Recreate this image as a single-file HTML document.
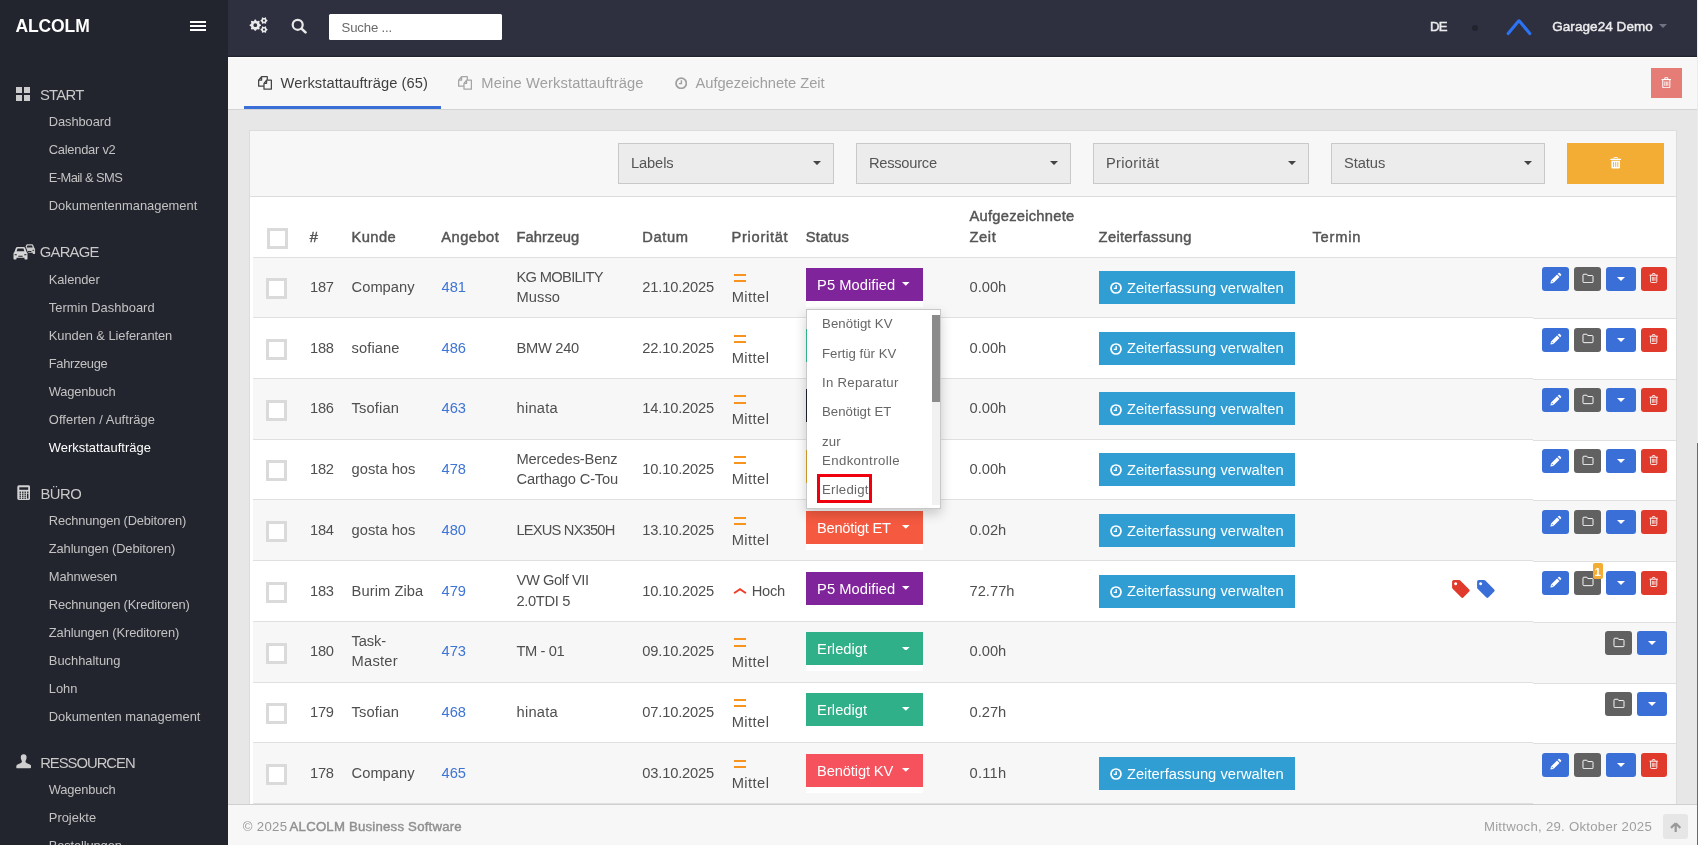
<!DOCTYPE html>
<html lang="de"><head><meta charset="utf-8"><title>ALCOLM</title><style>html,body{margin:0;padding:0;background:#fff;}
#p{position:absolute;left:0;top:0;width:1698px;height:845px;overflow:hidden;font-family:"Liberation Sans",sans-serif;font-size:14.4px;will-change:transform;}
#p main,#p nav,#p footer,#p header,#p aside{display:block;position:static;margin:0;padding:0;height:0;}
#p div,#p svg,#p .t{position:absolute;display:block;}
#p .t{white-space:nowrap;line-height:1;}</style></head><body><div id="p">
<div style="left:0px;top:0px;width:1698px;height:845px;background:#e7e7e7;"></div>
<div style="left:1697px;top:0px;width:1px;height:845px;background:#ececec;"></div>
<div style="left:1697px;top:443px;width:1px;height:402px;background:#6b6b6b;"></div>
<main>
<div style="left:249px;top:130px;width:1428px;height:680px;background:#ffffff;border:1px solid #dcdcdc;box-sizing:border-box;"></div>
<div style="left:250px;top:131px;width:1426px;height:65px;background:#f7f7f7;"></div>
<div style="left:250px;top:196px;width:1426px;height:1px;background:#dddddd;"></div>
<div style="left:618.3px;top:143.2px;width:215.7px;height:40.4px;background:#ececec;border:1px solid #c9c9c9;box-sizing:border-box;"></div>
<span class="t" style="left:631.00px;top:155px;font-size:14.7px;line-height:16px;color:#555;letter-spacing:-0.130px;">Labels</span>
<svg style="left:813px;top:161px;" width="8" height="4.1" viewBox="0 0 8 4"><path d="M0 0h8L4 4z" fill="#444"/></svg>
<div style="left:856.2px;top:143.2px;width:214.8px;height:40.4px;background:#ececec;border:1px solid #c9c9c9;box-sizing:border-box;"></div>
<span class="t" style="left:868.90px;top:155px;font-size:14.7px;line-height:16px;color:#555;letter-spacing:-0.245px;">Ressource</span>
<svg style="left:1050px;top:161px;" width="8" height="4.1" viewBox="0 0 8 4"><path d="M0 0h8L4 4z" fill="#444"/></svg>
<div style="left:1093.2px;top:143.2px;width:215.6px;height:40.4px;background:#ececec;border:1px solid #c9c9c9;box-sizing:border-box;"></div>
<span class="t" style="left:1105.90px;top:155px;font-size:14.7px;line-height:16px;color:#555;letter-spacing:0.311px;">Priorität</span>
<svg style="left:1287.8px;top:161px;" width="8" height="4.1" viewBox="0 0 8 4"><path d="M0 0h8L4 4z" fill="#444"/></svg>
<div style="left:1331.2px;top:143.2px;width:213.7px;height:40.4px;background:#ececec;border:1px solid #c9c9c9;box-sizing:border-box;"></div>
<span class="t" style="left:1343.90px;top:155px;font-size:14.7px;line-height:16px;color:#555;letter-spacing:-0.056px;">Status</span>
<svg style="left:1523.9px;top:161px;" width="8" height="4.1" viewBox="0 0 8 4"><path d="M0 0h8L4 4z" fill="#444"/></svg>
<div style="left:1567px;top:143px;width:97px;height:41px;background:#f3ad35;"></div>
<div style="left:252.5px;top:257px;width:1423.5px;height:1px;background:#e0e0e0;"></div>
<div style="left:252.5px;top:258px;width:1280.5px;height:59px;background:#f7f7f7;"></div>
<div style="left:1533px;top:258px;width:143px;height:60px;background:#f7f7f7;"></div>
<div style="left:252.5px;top:317px;width:1280.5px;height:1px;background:#e0e0e0;"></div>
<div style="left:1533px;top:318px;width:143px;height:1px;background:#e0e0e0;"></div>
<div style="left:266px;top:278.2px;width:21px;height:21px;background:#fff;border:3px solid #dadada;box-sizing:border-box;"></div>
<span class="t" style="left:310.10px;top:279px;font-size:14.7px;line-height:16px;color:#4f4f4f;letter-spacing:-0.335px;">187</span>
<span class="t" style="left:351.60px;top:279px;font-size:14.7px;line-height:16px;color:#4f4f4f;letter-spacing:0.006px;">Company</span>
<span class="t" style="left:441.50px;top:279px;font-size:14.7px;line-height:16px;color:#3d74d6;">481</span>
<span class="t" style="left:516.50px;top:269px;font-size:14.7px;line-height:16px;color:#4f4f4f;letter-spacing:-0.687px;">KG MOBILITY</span>
<span class="t" style="left:516.50px;top:289px;font-size:14.7px;line-height:16px;color:#4f4f4f;letter-spacing:0.048px;">Musso</span>
<span class="t" style="left:642.30px;top:279px;font-size:14.7px;line-height:16px;color:#4f4f4f;letter-spacing:-0.171px;">21.10.2025</span>
<div style="left:733.7px;top:273.8px;width:12.2px;height:2px;background:#f7941e;"></div>
<div style="left:733.7px;top:280.1px;width:12.2px;height:2px;background:#f7941e;"></div>
<span class="t" style="left:731.70px;top:289px;font-size:14.7px;line-height:16px;color:#4f4f4f;letter-spacing:0.435px;">Mittel</span>
<div style="left:806.2px;top:267.8px;width:116.8px;height:38.8px;background:#ffffff;"></div>
<div style="left:806.2px;top:267.8px;width:116.8px;height:33px;background:#80249b;"></div>
<span class="t" style="left:817.10px;top:277px;font-size:14.7px;line-height:16px;color:#fff;letter-spacing:0.049px;">P5 Modified</span>
<svg style="left:902.4px;top:282.2px;" width="7.6" height="3.8" viewBox="0 0 8 4"><path d="M0 0h8L4 4z" fill="#fff"/></svg>
<span class="t" style="left:969.50px;top:279px;font-size:14.7px;line-height:16px;color:#4f4f4f;letter-spacing:0.009px;">0.00h</span>
<div style="left:1099px;top:270.9px;width:196px;height:33.1px;background:#309ed3;"></div>
<svg style="left:1110.2px;top:282px;" width="12" height="12" viewBox="0 0 12 12"><circle cx="6" cy="6" r="5" fill="none" stroke="#fff" stroke-width="1.7"/><path d="M6.2 3.2v3.2H3.8" fill="none" stroke="#fff" stroke-width="1.4"/></svg>
<span class="t" style="left:1126.90px;top:280px;font-size:14.7px;line-height:16px;color:#fff;letter-spacing:0.034px;">Zeiterfassung verwalten</span>
<div style="left:1542px;top:266.9px;width:27px;height:24px;background:#3b6fd8;border-radius:3px;"></div>
<svg style="left:1549px;top:272.4px;" width="13" height="13" viewBox="0 0 14 14"><path d="M2.2 9.2 L1.5 12.5 L4.8 11.8 L11.3 5.3 L8.7 2.7 Z M9.4 2 L12 4.6 L12.9 3.7 a0.9 0.9 0 0 0 0-1.3 L11.6 1.1 a0.9 0.9 0 0 0-1.3 0 Z" fill="#fff"/><path d="M2.9 9.6 L4.4 11.1" stroke="#3b6fd8" stroke-width="0.9"/></svg>
<div style="left:1574px;top:266.9px;width:27px;height:24px;background:#616161;border-radius:3px;"></div>
<svg style="left:1581.5px;top:272.6px;" width="12" height="10.6" viewBox="0 0 12.6 11.2"><path d="M1 2.2 a0.9 0.9 0 0 1 .9-.9 h3.2 l1 1.4 h4.6 a0.9 0.9 0 0 1 .9.9 v5.7 a0.9 0.9 0 0 1-.9.9 h-8.8 a0.9 0.9 0 0 1-.9-.9 z" fill="none" stroke="#fff" stroke-width="1.0"/></svg>
<div style="left:1606px;top:266.9px;width:30px;height:24px;background:#3b6fd8;border-radius:3px;"></div>
<svg style="left:1617px;top:276.9px;" width="8" height="4" viewBox="0 0 8 4"><path d="M0 0h8L4 4z" fill="#fff"/></svg>
<div style="left:1641px;top:266.9px;width:26px;height:24px;background:#e03a2c;border-radius:3px;"></div>
<svg style="left:1649.3px;top:273.2px;" width="9.4" height="10.2" viewBox="0 0 12 13"><path d="M4.3 2.3 V1.4 a.7.7 0 0 1 .7-.7 h2 a.7.7 0 0 1 .7.7 v.9 M2 3 V11 a1.2 1.2 0 0 0 1.2 1.2 h5.6 a1.2 1.2 0 0 0 1.2-1.2 V3" fill="none" stroke="#fff" stroke-width="1.15"/><path d="M.7 2.8 H11.3" stroke="#fff" stroke-width="1.25"/><path d="M4.3 5 v5 M6 5 v5 M7.7 5 v5" stroke="#fff" stroke-width=".95"/></svg>
<div style="left:252.5px;top:378px;width:1280.5px;height:1px;background:#e0e0e0;"></div>
<div style="left:1533px;top:379px;width:143px;height:1px;background:#e0e0e0;"></div>
<div style="left:266px;top:338.95px;width:21px;height:21px;background:#fff;border:3px solid #dadada;box-sizing:border-box;"></div>
<span class="t" style="left:310.10px;top:340px;font-size:14.7px;line-height:16px;color:#4f4f4f;letter-spacing:-0.335px;">188</span>
<span class="t" style="left:351.60px;top:340px;font-size:14.7px;line-height:16px;color:#4f4f4f;letter-spacing:0.091px;">sofiane</span>
<span class="t" style="left:441.50px;top:340px;font-size:14.7px;line-height:16px;color:#3d74d6;">486</span>
<span class="t" style="left:516.50px;top:340px;font-size:14.7px;line-height:16px;color:#4f4f4f;letter-spacing:-0.283px;">BMW 240</span>
<span class="t" style="left:642.30px;top:340px;font-size:14.7px;line-height:16px;color:#4f4f4f;letter-spacing:-0.171px;">22.10.2025</span>
<div style="left:733.7px;top:334.55px;width:12.2px;height:2px;background:#f7941e;"></div>
<div style="left:733.7px;top:340.85px;width:12.2px;height:2px;background:#f7941e;"></div>
<span class="t" style="left:731.70px;top:350px;font-size:14.7px;line-height:16px;color:#4f4f4f;letter-spacing:0.435px;">Mittel</span>
<div style="left:806.2px;top:328.55px;width:116.8px;height:38.8px;background:#ffffff;"></div>
<div style="left:806.2px;top:328.55px;width:116.8px;height:33px;background:#30b088;"></div>
<span class="t" style="left:969.50px;top:340px;font-size:14.7px;line-height:16px;color:#4f4f4f;letter-spacing:0.009px;">0.00h</span>
<div style="left:1099px;top:331.65px;width:196px;height:33.1px;background:#309ed3;"></div>
<svg style="left:1110.2px;top:342.75px;" width="12" height="12" viewBox="0 0 12 12"><circle cx="6" cy="6" r="5" fill="none" stroke="#fff" stroke-width="1.7"/><path d="M6.2 3.2v3.2H3.8" fill="none" stroke="#fff" stroke-width="1.4"/></svg>
<span class="t" style="left:1126.90px;top:340px;font-size:14.7px;line-height:16px;color:#fff;letter-spacing:0.034px;">Zeiterfassung verwalten</span>
<div style="left:1542px;top:327.65px;width:27px;height:24px;background:#3b6fd8;border-radius:3px;"></div>
<svg style="left:1549px;top:333.15px;" width="13" height="13" viewBox="0 0 14 14"><path d="M2.2 9.2 L1.5 12.5 L4.8 11.8 L11.3 5.3 L8.7 2.7 Z M9.4 2 L12 4.6 L12.9 3.7 a0.9 0.9 0 0 0 0-1.3 L11.6 1.1 a0.9 0.9 0 0 0-1.3 0 Z" fill="#fff"/><path d="M2.9 9.6 L4.4 11.1" stroke="#3b6fd8" stroke-width="0.9"/></svg>
<div style="left:1574px;top:327.65px;width:27px;height:24px;background:#616161;border-radius:3px;"></div>
<svg style="left:1581.5px;top:333.35px;" width="12" height="10.6" viewBox="0 0 12.6 11.2"><path d="M1 2.2 a0.9 0.9 0 0 1 .9-.9 h3.2 l1 1.4 h4.6 a0.9 0.9 0 0 1 .9.9 v5.7 a0.9 0.9 0 0 1-.9.9 h-8.8 a0.9 0.9 0 0 1-.9-.9 z" fill="none" stroke="#fff" stroke-width="1.0"/></svg>
<div style="left:1606px;top:327.65px;width:30px;height:24px;background:#3b6fd8;border-radius:3px;"></div>
<svg style="left:1617px;top:337.65px;" width="8" height="4" viewBox="0 0 8 4"><path d="M0 0h8L4 4z" fill="#fff"/></svg>
<div style="left:1641px;top:327.65px;width:26px;height:24px;background:#e03a2c;border-radius:3px;"></div>
<svg style="left:1649.3px;top:333.95px;" width="9.4" height="10.2" viewBox="0 0 12 13"><path d="M4.3 2.3 V1.4 a.7.7 0 0 1 .7-.7 h2 a.7.7 0 0 1 .7.7 v.9 M2 3 V11 a1.2 1.2 0 0 0 1.2 1.2 h5.6 a1.2 1.2 0 0 0 1.2-1.2 V3" fill="none" stroke="#fff" stroke-width="1.15"/><path d="M.7 2.8 H11.3" stroke="#fff" stroke-width="1.25"/><path d="M4.3 5 v5 M6 5 v5 M7.7 5 v5" stroke="#fff" stroke-width=".95"/></svg>
<div style="left:252.5px;top:379px;width:1280.5px;height:60px;background:#f7f7f7;"></div>
<div style="left:1533px;top:380px;width:143px;height:60px;background:#f7f7f7;"></div>
<div style="left:252.5px;top:439px;width:1280.5px;height:1px;background:#e0e0e0;"></div>
<div style="left:1533px;top:440px;width:143px;height:1px;background:#e0e0e0;"></div>
<div style="left:266px;top:399.7px;width:21px;height:21px;background:#fff;border:3px solid #dadada;box-sizing:border-box;"></div>
<span class="t" style="left:310.10px;top:400px;font-size:14.7px;line-height:16px;color:#4f4f4f;letter-spacing:-0.335px;">186</span>
<span class="t" style="left:351.60px;top:400px;font-size:14.7px;line-height:16px;color:#4f4f4f;letter-spacing:0.138px;">Tsofian</span>
<span class="t" style="left:441.50px;top:400px;font-size:14.7px;line-height:16px;color:#3d74d6;">463</span>
<span class="t" style="left:516.50px;top:400px;font-size:14.7px;line-height:16px;color:#4f4f4f;letter-spacing:0.247px;">hinata</span>
<span class="t" style="left:642.30px;top:400px;font-size:14.7px;line-height:16px;color:#4f4f4f;letter-spacing:-0.171px;">14.10.2025</span>
<div style="left:733.7px;top:395.3px;width:12.2px;height:2px;background:#f7941e;"></div>
<div style="left:733.7px;top:401.6px;width:12.2px;height:2px;background:#f7941e;"></div>
<span class="t" style="left:731.70px;top:411px;font-size:14.7px;line-height:16px;color:#4f4f4f;letter-spacing:0.435px;">Mittel</span>
<div style="left:806.2px;top:389.3px;width:116.8px;height:38.8px;background:#ffffff;"></div>
<div style="left:806.2px;top:389.3px;width:116.8px;height:33px;background:#1b1d2b;"></div>
<span class="t" style="left:969.50px;top:400px;font-size:14.7px;line-height:16px;color:#4f4f4f;letter-spacing:0.009px;">0.00h</span>
<div style="left:1099px;top:392.4px;width:196px;height:33.1px;background:#309ed3;"></div>
<svg style="left:1110.2px;top:403.5px;" width="12" height="12" viewBox="0 0 12 12"><circle cx="6" cy="6" r="5" fill="none" stroke="#fff" stroke-width="1.7"/><path d="M6.2 3.2v3.2H3.8" fill="none" stroke="#fff" stroke-width="1.4"/></svg>
<span class="t" style="left:1126.90px;top:401px;font-size:14.7px;line-height:16px;color:#fff;letter-spacing:0.034px;">Zeiterfassung verwalten</span>
<div style="left:1542px;top:388.4px;width:27px;height:24px;background:#3b6fd8;border-radius:3px;"></div>
<svg style="left:1549px;top:393.9px;" width="13" height="13" viewBox="0 0 14 14"><path d="M2.2 9.2 L1.5 12.5 L4.8 11.8 L11.3 5.3 L8.7 2.7 Z M9.4 2 L12 4.6 L12.9 3.7 a0.9 0.9 0 0 0 0-1.3 L11.6 1.1 a0.9 0.9 0 0 0-1.3 0 Z" fill="#fff"/><path d="M2.9 9.6 L4.4 11.1" stroke="#3b6fd8" stroke-width="0.9"/></svg>
<div style="left:1574px;top:388.4px;width:27px;height:24px;background:#616161;border-radius:3px;"></div>
<svg style="left:1581.5px;top:394.1px;" width="12" height="10.6" viewBox="0 0 12.6 11.2"><path d="M1 2.2 a0.9 0.9 0 0 1 .9-.9 h3.2 l1 1.4 h4.6 a0.9 0.9 0 0 1 .9.9 v5.7 a0.9 0.9 0 0 1-.9.9 h-8.8 a0.9 0.9 0 0 1-.9-.9 z" fill="none" stroke="#fff" stroke-width="1.0"/></svg>
<div style="left:1606px;top:388.4px;width:30px;height:24px;background:#3b6fd8;border-radius:3px;"></div>
<svg style="left:1617px;top:398.4px;" width="8" height="4" viewBox="0 0 8 4"><path d="M0 0h8L4 4z" fill="#fff"/></svg>
<div style="left:1641px;top:388.4px;width:26px;height:24px;background:#e03a2c;border-radius:3px;"></div>
<svg style="left:1649.3px;top:394.7px;" width="9.4" height="10.2" viewBox="0 0 12 13"><path d="M4.3 2.3 V1.4 a.7.7 0 0 1 .7-.7 h2 a.7.7 0 0 1 .7.7 v.9 M2 3 V11 a1.2 1.2 0 0 0 1.2 1.2 h5.6 a1.2 1.2 0 0 0 1.2-1.2 V3" fill="none" stroke="#fff" stroke-width="1.15"/><path d="M.7 2.8 H11.3" stroke="#fff" stroke-width="1.25"/><path d="M4.3 5 v5 M6 5 v5 M7.7 5 v5" stroke="#fff" stroke-width=".95"/></svg>
<div style="left:252.5px;top:499px;width:1280.5px;height:1px;background:#e0e0e0;"></div>
<div style="left:1533px;top:500px;width:143px;height:1px;background:#e0e0e0;"></div>
<div style="left:266px;top:460.45px;width:21px;height:21px;background:#fff;border:3px solid #dadada;box-sizing:border-box;"></div>
<span class="t" style="left:310.10px;top:461px;font-size:14.7px;line-height:16px;color:#4f4f4f;letter-spacing:-0.335px;">182</span>
<span class="t" style="left:351.60px;top:461px;font-size:14.7px;line-height:16px;color:#4f4f4f;letter-spacing:0.012px;">gosta hos</span>
<span class="t" style="left:441.50px;top:461px;font-size:14.7px;line-height:16px;color:#3d74d6;">478</span>
<span class="t" style="left:516.50px;top:451px;font-size:14.7px;line-height:16px;color:#4f4f4f;letter-spacing:-0.143px;">Mercedes-Benz</span>
<span class="t" style="left:516.50px;top:471px;font-size:14.7px;line-height:16px;color:#4f4f4f;letter-spacing:-0.148px;">Carthago C-Tou</span>
<span class="t" style="left:642.30px;top:461px;font-size:14.7px;line-height:16px;color:#4f4f4f;letter-spacing:-0.171px;">10.10.2025</span>
<div style="left:733.7px;top:456.05px;width:12.2px;height:2px;background:#f7941e;"></div>
<div style="left:733.7px;top:462.35px;width:12.2px;height:2px;background:#f7941e;"></div>
<span class="t" style="left:731.70px;top:471px;font-size:14.7px;line-height:16px;color:#4f4f4f;letter-spacing:0.435px;">Mittel</span>
<div style="left:806.2px;top:450.05px;width:116.8px;height:38.8px;background:#ffffff;"></div>
<div style="left:806.2px;top:450.05px;width:116.8px;height:33px;background:#c9962c;"></div>
<span class="t" style="left:969.50px;top:461px;font-size:14.7px;line-height:16px;color:#4f4f4f;letter-spacing:0.009px;">0.00h</span>
<div style="left:1099px;top:453.15px;width:196px;height:33.1px;background:#309ed3;"></div>
<svg style="left:1110.2px;top:464.25px;" width="12" height="12" viewBox="0 0 12 12"><circle cx="6" cy="6" r="5" fill="none" stroke="#fff" stroke-width="1.7"/><path d="M6.2 3.2v3.2H3.8" fill="none" stroke="#fff" stroke-width="1.4"/></svg>
<span class="t" style="left:1126.90px;top:462px;font-size:14.7px;line-height:16px;color:#fff;letter-spacing:0.034px;">Zeiterfassung verwalten</span>
<div style="left:1542px;top:449.15px;width:27px;height:24px;background:#3b6fd8;border-radius:3px;"></div>
<svg style="left:1549px;top:454.65px;" width="13" height="13" viewBox="0 0 14 14"><path d="M2.2 9.2 L1.5 12.5 L4.8 11.8 L11.3 5.3 L8.7 2.7 Z M9.4 2 L12 4.6 L12.9 3.7 a0.9 0.9 0 0 0 0-1.3 L11.6 1.1 a0.9 0.9 0 0 0-1.3 0 Z" fill="#fff"/><path d="M2.9 9.6 L4.4 11.1" stroke="#3b6fd8" stroke-width="0.9"/></svg>
<div style="left:1574px;top:449.15px;width:27px;height:24px;background:#616161;border-radius:3px;"></div>
<svg style="left:1581.5px;top:454.85px;" width="12" height="10.6" viewBox="0 0 12.6 11.2"><path d="M1 2.2 a0.9 0.9 0 0 1 .9-.9 h3.2 l1 1.4 h4.6 a0.9 0.9 0 0 1 .9.9 v5.7 a0.9 0.9 0 0 1-.9.9 h-8.8 a0.9 0.9 0 0 1-.9-.9 z" fill="none" stroke="#fff" stroke-width="1.0"/></svg>
<div style="left:1606px;top:449.15px;width:30px;height:24px;background:#3b6fd8;border-radius:3px;"></div>
<svg style="left:1617px;top:459.15px;" width="8" height="4" viewBox="0 0 8 4"><path d="M0 0h8L4 4z" fill="#fff"/></svg>
<div style="left:1641px;top:449.15px;width:26px;height:24px;background:#e03a2c;border-radius:3px;"></div>
<svg style="left:1649.3px;top:455.45px;" width="9.4" height="10.2" viewBox="0 0 12 13"><path d="M4.3 2.3 V1.4 a.7.7 0 0 1 .7-.7 h2 a.7.7 0 0 1 .7.7 v.9 M2 3 V11 a1.2 1.2 0 0 0 1.2 1.2 h5.6 a1.2 1.2 0 0 0 1.2-1.2 V3" fill="none" stroke="#fff" stroke-width="1.15"/><path d="M.7 2.8 H11.3" stroke="#fff" stroke-width="1.25"/><path d="M4.3 5 v5 M6 5 v5 M7.7 5 v5" stroke="#fff" stroke-width=".95"/></svg>
<div style="left:252.5px;top:500px;width:1280.5px;height:60px;background:#f7f7f7;"></div>
<div style="left:1533px;top:501px;width:143px;height:60px;background:#f7f7f7;"></div>
<div style="left:252.5px;top:560px;width:1280.5px;height:1px;background:#e0e0e0;"></div>
<div style="left:1533px;top:561px;width:143px;height:1px;background:#e0e0e0;"></div>
<div style="left:266px;top:521.2px;width:21px;height:21px;background:#fff;border:3px solid #dadada;box-sizing:border-box;"></div>
<span class="t" style="left:310.10px;top:522px;font-size:14.7px;line-height:16px;color:#4f4f4f;letter-spacing:-0.335px;">184</span>
<span class="t" style="left:351.60px;top:522px;font-size:14.7px;line-height:16px;color:#4f4f4f;letter-spacing:0.012px;">gosta hos</span>
<span class="t" style="left:441.50px;top:522px;font-size:14.7px;line-height:16px;color:#3d74d6;">480</span>
<span class="t" style="left:516.50px;top:522px;font-size:14.7px;line-height:16px;color:#4f4f4f;letter-spacing:-0.813px;">LEXUS NX350H</span>
<span class="t" style="left:642.30px;top:522px;font-size:14.7px;line-height:16px;color:#4f4f4f;letter-spacing:-0.171px;">13.10.2025</span>
<div style="left:733.7px;top:516.8px;width:12.2px;height:2px;background:#f7941e;"></div>
<div style="left:733.7px;top:523.1px;width:12.2px;height:2px;background:#f7941e;"></div>
<span class="t" style="left:731.70px;top:532px;font-size:14.7px;line-height:16px;color:#4f4f4f;letter-spacing:0.435px;">Mittel</span>
<div style="left:806.2px;top:510.8px;width:116.8px;height:38.8px;background:#ffffff;"></div>
<div style="left:806.2px;top:510.8px;width:116.8px;height:33px;background:#f55a40;"></div>
<span class="t" style="left:817.10px;top:520px;font-size:14.7px;line-height:16px;color:#fff;letter-spacing:-0.295px;">Benötigt ET</span>
<svg style="left:902.4px;top:525.2px;" width="7.6" height="3.8" viewBox="0 0 8 4"><path d="M0 0h8L4 4z" fill="#fff"/></svg>
<span class="t" style="left:969.50px;top:522px;font-size:14.7px;line-height:16px;color:#4f4f4f;letter-spacing:0.009px;">0.02h</span>
<div style="left:1099px;top:513.9px;width:196px;height:33.1px;background:#309ed3;"></div>
<svg style="left:1110.2px;top:525px;" width="12" height="12" viewBox="0 0 12 12"><circle cx="6" cy="6" r="5" fill="none" stroke="#fff" stroke-width="1.7"/><path d="M6.2 3.2v3.2H3.8" fill="none" stroke="#fff" stroke-width="1.4"/></svg>
<span class="t" style="left:1126.90px;top:523px;font-size:14.7px;line-height:16px;color:#fff;letter-spacing:0.034px;">Zeiterfassung verwalten</span>
<div style="left:1542px;top:509.9px;width:27px;height:24px;background:#3b6fd8;border-radius:3px;"></div>
<svg style="left:1549px;top:515.4px;" width="13" height="13" viewBox="0 0 14 14"><path d="M2.2 9.2 L1.5 12.5 L4.8 11.8 L11.3 5.3 L8.7 2.7 Z M9.4 2 L12 4.6 L12.9 3.7 a0.9 0.9 0 0 0 0-1.3 L11.6 1.1 a0.9 0.9 0 0 0-1.3 0 Z" fill="#fff"/><path d="M2.9 9.6 L4.4 11.1" stroke="#3b6fd8" stroke-width="0.9"/></svg>
<div style="left:1574px;top:509.9px;width:27px;height:24px;background:#616161;border-radius:3px;"></div>
<svg style="left:1581.5px;top:515.6px;" width="12" height="10.6" viewBox="0 0 12.6 11.2"><path d="M1 2.2 a0.9 0.9 0 0 1 .9-.9 h3.2 l1 1.4 h4.6 a0.9 0.9 0 0 1 .9.9 v5.7 a0.9 0.9 0 0 1-.9.9 h-8.8 a0.9 0.9 0 0 1-.9-.9 z" fill="none" stroke="#fff" stroke-width="1.0"/></svg>
<div style="left:1606px;top:509.9px;width:30px;height:24px;background:#3b6fd8;border-radius:3px;"></div>
<svg style="left:1617px;top:519.9px;" width="8" height="4" viewBox="0 0 8 4"><path d="M0 0h8L4 4z" fill="#fff"/></svg>
<div style="left:1641px;top:509.9px;width:26px;height:24px;background:#e03a2c;border-radius:3px;"></div>
<svg style="left:1649.3px;top:516.2px;" width="9.4" height="10.2" viewBox="0 0 12 13"><path d="M4.3 2.3 V1.4 a.7.7 0 0 1 .7-.7 h2 a.7.7 0 0 1 .7.7 v.9 M2 3 V11 a1.2 1.2 0 0 0 1.2 1.2 h5.6 a1.2 1.2 0 0 0 1.2-1.2 V3" fill="none" stroke="#fff" stroke-width="1.15"/><path d="M.7 2.8 H11.3" stroke="#fff" stroke-width="1.25"/><path d="M4.3 5 v5 M6 5 v5 M7.7 5 v5" stroke="#fff" stroke-width=".95"/></svg>
<div style="left:252.5px;top:621px;width:1280.5px;height:1px;background:#e0e0e0;"></div>
<div style="left:1533px;top:622px;width:143px;height:1px;background:#e0e0e0;"></div>
<div style="left:266px;top:581.95px;width:21px;height:21px;background:#fff;border:3px solid #dadada;box-sizing:border-box;"></div>
<span class="t" style="left:310.10px;top:583px;font-size:14.7px;line-height:16px;color:#4f4f4f;letter-spacing:-0.335px;">183</span>
<span class="t" style="left:351.60px;top:583px;font-size:14.7px;line-height:16px;color:#4f4f4f;letter-spacing:0.059px;">Burim Ziba</span>
<span class="t" style="left:441.50px;top:583px;font-size:14.7px;line-height:16px;color:#3d74d6;">479</span>
<span class="t" style="left:516.50px;top:572px;font-size:14.7px;line-height:16px;color:#4f4f4f;letter-spacing:-0.410px;">VW Golf VII</span>
<span class="t" style="left:516.50px;top:593px;font-size:14.7px;line-height:16px;color:#4f4f4f;letter-spacing:-0.353px;">2.0TDI 5</span>
<span class="t" style="left:642.30px;top:583px;font-size:14.7px;line-height:16px;color:#4f4f4f;letter-spacing:-0.171px;">10.10.2025</span>
<svg style="left:733px;top:587.35px;" width="14" height="7" viewBox="0 0 14 7"><path d="M1.7 5.7 L7 2.2 L12.3 5.7" fill="none" stroke="#f03b25" stroke-width="1.9" stroke-linecap="round"/></svg>
<span class="t" style="left:751.70px;top:583px;font-size:14.7px;line-height:16px;color:#4f4f4f;letter-spacing:-0.247px;">Hoch</span>
<div style="left:806.2px;top:571.55px;width:116.8px;height:38.8px;background:#ffffff;"></div>
<div style="left:806.2px;top:571.55px;width:116.8px;height:33px;background:#80249b;"></div>
<span class="t" style="left:817.10px;top:581px;font-size:14.7px;line-height:16px;color:#fff;letter-spacing:0.049px;">P5 Modified</span>
<svg style="left:902.4px;top:585.95px;" width="7.6" height="3.8" viewBox="0 0 8 4"><path d="M0 0h8L4 4z" fill="#fff"/></svg>
<span class="t" style="left:969.50px;top:583px;font-size:14.7px;line-height:16px;color:#4f4f4f;letter-spacing:0.013px;">72.77h</span>
<div style="left:1099px;top:574.65px;width:196px;height:33.1px;background:#309ed3;"></div>
<svg style="left:1110.2px;top:585.75px;" width="12" height="12" viewBox="0 0 12 12"><circle cx="6" cy="6" r="5" fill="none" stroke="#fff" stroke-width="1.7"/><path d="M6.2 3.2v3.2H3.8" fill="none" stroke="#fff" stroke-width="1.4"/></svg>
<span class="t" style="left:1126.90px;top:583px;font-size:14.7px;line-height:16px;color:#fff;letter-spacing:0.034px;">Zeiterfassung verwalten</span>
<div style="left:1542px;top:570.65px;width:27px;height:24px;background:#3b6fd8;border-radius:3px;"></div>
<svg style="left:1549px;top:576.15px;" width="13" height="13" viewBox="0 0 14 14"><path d="M2.2 9.2 L1.5 12.5 L4.8 11.8 L11.3 5.3 L8.7 2.7 Z M9.4 2 L12 4.6 L12.9 3.7 a0.9 0.9 0 0 0 0-1.3 L11.6 1.1 a0.9 0.9 0 0 0-1.3 0 Z" fill="#fff"/><path d="M2.9 9.6 L4.4 11.1" stroke="#3b6fd8" stroke-width="0.9"/></svg>
<div style="left:1574px;top:570.65px;width:27px;height:24px;background:#616161;border-radius:3px;"></div>
<svg style="left:1581.5px;top:576.35px;" width="12" height="10.6" viewBox="0 0 12.6 11.2"><path d="M1 2.2 a0.9 0.9 0 0 1 .9-.9 h3.2 l1 1.4 h4.6 a0.9 0.9 0 0 1 .9.9 v5.7 a0.9 0.9 0 0 1-.9.9 h-8.8 a0.9 0.9 0 0 1-.9-.9 z" fill="none" stroke="#fff" stroke-width="1.0"/></svg>
<div style="left:1606px;top:570.65px;width:30px;height:24px;background:#3b6fd8;border-radius:3px;"></div>
<svg style="left:1617px;top:580.65px;" width="8" height="4" viewBox="0 0 8 4"><path d="M0 0h8L4 4z" fill="#fff"/></svg>
<div style="left:1641px;top:570.65px;width:26px;height:24px;background:#e03a2c;border-radius:3px;"></div>
<svg style="left:1649.3px;top:576.95px;" width="9.4" height="10.2" viewBox="0 0 12 13"><path d="M4.3 2.3 V1.4 a.7.7 0 0 1 .7-.7 h2 a.7.7 0 0 1 .7.7 v.9 M2 3 V11 a1.2 1.2 0 0 0 1.2 1.2 h5.6 a1.2 1.2 0 0 0 1.2-1.2 V3" fill="none" stroke="#fff" stroke-width="1.15"/><path d="M.7 2.8 H11.3" stroke="#fff" stroke-width="1.25"/><path d="M4.3 5 v5 M6 5 v5 M7.7 5 v5" stroke="#fff" stroke-width=".95"/></svg>
<svg style="left:1450.5px;top:578.95px;" width="20.5" height="20.5" viewBox="0 0 19 19"><path d="M1 2.6 a1.6 1.6 0 0 1 1.6-1.6 h4.9 a1.6 1.6 0 0 1 1.1.5 l8.3 8.3 a1.3 1.3 0 0 1 0 1.8 l-5.5 5.5 a1.3 1.3 0 0 1-1.8 0 l-8.1-8.1 a1.6 1.6 0 0 1-.5-1.1 z M4.3 2.9 a1.4 1.4 0 1 0 .01 0z" fill="#e03a2c" fill-rule="evenodd"/></svg>
<svg style="left:1475.8px;top:578.95px;" width="20.5" height="20.5" viewBox="0 0 19 19"><path d="M1 2.6 a1.6 1.6 0 0 1 1.6-1.6 h4.9 a1.6 1.6 0 0 1 1.1.5 l8.3 8.3 a1.3 1.3 0 0 1 0 1.8 l-5.5 5.5 a1.3 1.3 0 0 1-1.8 0 l-8.1-8.1 a1.6 1.6 0 0 1-.5-1.1 z M4.3 2.9 a1.4 1.4 0 1 0 .01 0z" fill="#3b6fd8" fill-rule="evenodd"/></svg>
<div style="left:1593px;top:562.55px;width:10px;height:16.6px;background:#f3ad35;border-radius:2px;"></div>
<span class="t" style="left:1594.60px;top:566px;font-size:11.5px;line-height:12px;color:#fff;font-weight:700;">1</span>
<div style="left:252.5px;top:622px;width:1280.5px;height:60px;background:#f7f7f7;"></div>
<div style="left:1533px;top:623px;width:143px;height:60px;background:#f7f7f7;"></div>
<div style="left:252.5px;top:682px;width:1280.5px;height:1px;background:#e0e0e0;"></div>
<div style="left:1533px;top:683px;width:143px;height:1px;background:#e0e0e0;"></div>
<div style="left:266px;top:642.7px;width:21px;height:21px;background:#fff;border:3px solid #dadada;box-sizing:border-box;"></div>
<span class="t" style="left:310.10px;top:643px;font-size:14.7px;line-height:16px;color:#4f4f4f;letter-spacing:-0.335px;">180</span>
<span class="t" style="left:351.60px;top:633px;font-size:14.7px;line-height:16px;color:#4f4f4f;letter-spacing:-0.158px;">Task-</span>
<span class="t" style="left:351.60px;top:653px;font-size:14.7px;line-height:16px;color:#4f4f4f;letter-spacing:0.219px;">Master</span>
<span class="t" style="left:441.50px;top:643px;font-size:14.7px;line-height:16px;color:#3d74d6;">473</span>
<span class="t" style="left:516.50px;top:643px;font-size:14.7px;line-height:16px;color:#4f4f4f;letter-spacing:-0.414px;">TM - 01</span>
<span class="t" style="left:642.30px;top:643px;font-size:14.7px;line-height:16px;color:#4f4f4f;letter-spacing:-0.171px;">09.10.2025</span>
<div style="left:733.7px;top:638.3px;width:12.2px;height:2px;background:#f7941e;"></div>
<div style="left:733.7px;top:644.6px;width:12.2px;height:2px;background:#f7941e;"></div>
<span class="t" style="left:731.70px;top:654px;font-size:14.7px;line-height:16px;color:#4f4f4f;letter-spacing:0.435px;">Mittel</span>
<div style="left:806.2px;top:632.3px;width:116.8px;height:38.8px;background:#ffffff;"></div>
<div style="left:806.2px;top:632.3px;width:116.8px;height:33px;background:#30b088;"></div>
<span class="t" style="left:817.10px;top:641px;font-size:14.7px;line-height:16px;color:#fff;letter-spacing:0.038px;">Erledigt</span>
<svg style="left:902.4px;top:646.7px;" width="7.6" height="3.8" viewBox="0 0 8 4"><path d="M0 0h8L4 4z" fill="#fff"/></svg>
<span class="t" style="left:969.50px;top:643px;font-size:14.7px;line-height:16px;color:#4f4f4f;letter-spacing:0.009px;">0.00h</span>
<div style="left:1605px;top:631.4px;width:27px;height:24px;background:#616161;border-radius:3px;"></div>
<svg style="left:1612.5px;top:637.1px;" width="12" height="10.6" viewBox="0 0 12.6 11.2"><path d="M1 2.2 a0.9 0.9 0 0 1 .9-.9 h3.2 l1 1.4 h4.6 a0.9 0.9 0 0 1 .9.9 v5.7 a0.9 0.9 0 0 1-.9.9 h-8.8 a0.9 0.9 0 0 1-.9-.9 z" fill="none" stroke="#fff" stroke-width="1.0"/></svg>
<div style="left:1637px;top:631.4px;width:30px;height:24px;background:#3b6fd8;border-radius:3px;"></div>
<svg style="left:1648px;top:641.4px;" width="8" height="4" viewBox="0 0 8 4"><path d="M0 0h8L4 4z" fill="#fff"/></svg>
<div style="left:252.5px;top:742px;width:1280.5px;height:1px;background:#e0e0e0;"></div>
<div style="left:1533px;top:743px;width:143px;height:1px;background:#e0e0e0;"></div>
<div style="left:266px;top:703.45px;width:21px;height:21px;background:#fff;border:3px solid #dadada;box-sizing:border-box;"></div>
<span class="t" style="left:310.10px;top:704px;font-size:14.7px;line-height:16px;color:#4f4f4f;letter-spacing:-0.335px;">179</span>
<span class="t" style="left:351.60px;top:704px;font-size:14.7px;line-height:16px;color:#4f4f4f;letter-spacing:0.138px;">Tsofian</span>
<span class="t" style="left:441.50px;top:704px;font-size:14.7px;line-height:16px;color:#3d74d6;">468</span>
<span class="t" style="left:516.50px;top:704px;font-size:14.7px;line-height:16px;color:#4f4f4f;letter-spacing:0.247px;">hinata</span>
<span class="t" style="left:642.30px;top:704px;font-size:14.7px;line-height:16px;color:#4f4f4f;letter-spacing:-0.171px;">07.10.2025</span>
<div style="left:733.7px;top:699.05px;width:12.2px;height:2px;background:#f7941e;"></div>
<div style="left:733.7px;top:705.35px;width:12.2px;height:2px;background:#f7941e;"></div>
<span class="t" style="left:731.70px;top:714px;font-size:14.7px;line-height:16px;color:#4f4f4f;letter-spacing:0.435px;">Mittel</span>
<div style="left:806.2px;top:693.05px;width:116.8px;height:38.8px;background:#ffffff;"></div>
<div style="left:806.2px;top:693.05px;width:116.8px;height:33px;background:#30b088;"></div>
<span class="t" style="left:817.10px;top:702px;font-size:14.7px;line-height:16px;color:#fff;letter-spacing:0.038px;">Erledigt</span>
<svg style="left:902.4px;top:707.45px;" width="7.6" height="3.8" viewBox="0 0 8 4"><path d="M0 0h8L4 4z" fill="#fff"/></svg>
<span class="t" style="left:969.50px;top:704px;font-size:14.7px;line-height:16px;color:#4f4f4f;letter-spacing:0.009px;">0.27h</span>
<div style="left:1605px;top:692.15px;width:27px;height:24px;background:#616161;border-radius:3px;"></div>
<svg style="left:1612.5px;top:697.85px;" width="12" height="10.6" viewBox="0 0 12.6 11.2"><path d="M1 2.2 a0.9 0.9 0 0 1 .9-.9 h3.2 l1 1.4 h4.6 a0.9 0.9 0 0 1 .9.9 v5.7 a0.9 0.9 0 0 1-.9.9 h-8.8 a0.9 0.9 0 0 1-.9-.9 z" fill="none" stroke="#fff" stroke-width="1.0"/></svg>
<div style="left:1637px;top:692.15px;width:30px;height:24px;background:#3b6fd8;border-radius:3px;"></div>
<svg style="left:1648px;top:702.15px;" width="8" height="4" viewBox="0 0 8 4"><path d="M0 0h8L4 4z" fill="#fff"/></svg>
<div style="left:252.5px;top:743px;width:1280.5px;height:60px;background:#f7f7f7;"></div>
<div style="left:1533px;top:744px;width:143px;height:60px;background:#f7f7f7;"></div>
<div style="left:252.5px;top:803px;width:1280.5px;height:1px;background:#e0e0e0;"></div>
<div style="left:1533px;top:804px;width:143px;height:1px;background:#e0e0e0;"></div>
<div style="left:266px;top:764.2px;width:21px;height:21px;background:#fff;border:3px solid #dadada;box-sizing:border-box;"></div>
<span class="t" style="left:310.10px;top:765px;font-size:14.7px;line-height:16px;color:#4f4f4f;letter-spacing:-0.335px;">178</span>
<span class="t" style="left:351.60px;top:765px;font-size:14.7px;line-height:16px;color:#4f4f4f;letter-spacing:0.006px;">Company</span>
<span class="t" style="left:441.50px;top:765px;font-size:14.7px;line-height:16px;color:#3d74d6;">465</span>
<span class="t" style="left:642.30px;top:765px;font-size:14.7px;line-height:16px;color:#4f4f4f;letter-spacing:-0.171px;">03.10.2025</span>
<div style="left:733.7px;top:759.8px;width:12.2px;height:2px;background:#f7941e;"></div>
<div style="left:733.7px;top:766.1px;width:12.2px;height:2px;background:#f7941e;"></div>
<span class="t" style="left:731.70px;top:775px;font-size:14.7px;line-height:16px;color:#4f4f4f;letter-spacing:0.435px;">Mittel</span>
<div style="left:806.2px;top:753.8px;width:116.8px;height:38.8px;background:#ffffff;"></div>
<div style="left:806.2px;top:753.8px;width:116.8px;height:33px;background:#f5525d;"></div>
<span class="t" style="left:817.10px;top:763px;font-size:14.7px;line-height:16px;color:#fff;letter-spacing:-0.133px;">Benötigt KV</span>
<svg style="left:902.4px;top:768.2px;" width="7.6" height="3.8" viewBox="0 0 8 4"><path d="M0 0h8L4 4z" fill="#fff"/></svg>
<span class="t" style="left:969.50px;top:765px;font-size:14.7px;line-height:16px;color:#4f4f4f;letter-spacing:0.227px;">0.11h</span>
<div style="left:1099px;top:756.9px;width:196px;height:33.1px;background:#309ed3;"></div>
<svg style="left:1110.2px;top:768px;" width="12" height="12" viewBox="0 0 12 12"><circle cx="6" cy="6" r="5" fill="none" stroke="#fff" stroke-width="1.7"/><path d="M6.2 3.2v3.2H3.8" fill="none" stroke="#fff" stroke-width="1.4"/></svg>
<span class="t" style="left:1126.90px;top:766px;font-size:14.7px;line-height:16px;color:#fff;letter-spacing:0.034px;">Zeiterfassung verwalten</span>
<div style="left:1542px;top:752.9px;width:27px;height:24px;background:#3b6fd8;border-radius:3px;"></div>
<svg style="left:1549px;top:758.4px;" width="13" height="13" viewBox="0 0 14 14"><path d="M2.2 9.2 L1.5 12.5 L4.8 11.8 L11.3 5.3 L8.7 2.7 Z M9.4 2 L12 4.6 L12.9 3.7 a0.9 0.9 0 0 0 0-1.3 L11.6 1.1 a0.9 0.9 0 0 0-1.3 0 Z" fill="#fff"/><path d="M2.9 9.6 L4.4 11.1" stroke="#3b6fd8" stroke-width="0.9"/></svg>
<div style="left:1574px;top:752.9px;width:27px;height:24px;background:#616161;border-radius:3px;"></div>
<svg style="left:1581.5px;top:758.6px;" width="12" height="10.6" viewBox="0 0 12.6 11.2"><path d="M1 2.2 a0.9 0.9 0 0 1 .9-.9 h3.2 l1 1.4 h4.6 a0.9 0.9 0 0 1 .9.9 v5.7 a0.9 0.9 0 0 1-.9.9 h-8.8 a0.9 0.9 0 0 1-.9-.9 z" fill="none" stroke="#fff" stroke-width="1.0"/></svg>
<div style="left:1606px;top:752.9px;width:30px;height:24px;background:#3b6fd8;border-radius:3px;"></div>
<svg style="left:1617px;top:762.9px;" width="8" height="4" viewBox="0 0 8 4"><path d="M0 0h8L4 4z" fill="#fff"/></svg>
<div style="left:1641px;top:752.9px;width:26px;height:24px;background:#e03a2c;border-radius:3px;"></div>
<svg style="left:1649.3px;top:759.2px;" width="9.4" height="10.2" viewBox="0 0 12 13"><path d="M4.3 2.3 V1.4 a.7.7 0 0 1 .7-.7 h2 a.7.7 0 0 1 .7.7 v.9 M2 3 V11 a1.2 1.2 0 0 0 1.2 1.2 h5.6 a1.2 1.2 0 0 0 1.2-1.2 V3" fill="none" stroke="#fff" stroke-width="1.15"/><path d="M.7 2.8 H11.3" stroke="#fff" stroke-width="1.25"/><path d="M4.3 5 v5 M6 5 v5 M7.7 5 v5" stroke="#fff" stroke-width=".95"/></svg>
<div style="left:267px;top:228px;width:21px;height:21px;background:#fff;border:3px solid #dadada;box-sizing:border-box;"></div>
<span class="t" style="left:309.70px;top:229px;font-size:14.7px;line-height:16px;color:#555;-webkit-text-stroke:0.45px #555;letter-spacing:2.132px;">#</span>
<span class="t" style="left:351.60px;top:229px;font-size:14.7px;line-height:16px;color:#555;-webkit-text-stroke:0.45px #555;letter-spacing:0.386px;">Kunde</span>
<span class="t" style="left:441.30px;top:229px;font-size:14.7px;line-height:16px;color:#555;-webkit-text-stroke:0.45px #555;letter-spacing:0.454px;">Angebot</span>
<span class="t" style="left:516.50px;top:229px;font-size:14.7px;line-height:16px;color:#555;-webkit-text-stroke:0.45px #555;letter-spacing:0.094px;">Fahrzeug</span>
<span class="t" style="left:642.30px;top:229px;font-size:14.7px;line-height:16px;color:#555;-webkit-text-stroke:0.45px #555;letter-spacing:0.608px;">Datum</span>
<span class="t" style="left:731.50px;top:229px;font-size:14.7px;line-height:16px;color:#555;-webkit-text-stroke:0.45px #555;letter-spacing:0.700px;">Priorität</span>
<span class="t" style="left:805.80px;top:229px;font-size:14.7px;line-height:16px;color:#555;-webkit-text-stroke:0.45px #555;letter-spacing:0.260px;">Status</span>
<span class="t" style="left:969.50px;top:229px;font-size:14.7px;line-height:16px;color:#555;-webkit-text-stroke:0.45px #555;letter-spacing:0.579px;">Zeit</span>
<span class="t" style="left:1098.60px;top:229px;font-size:14.7px;line-height:16px;color:#555;-webkit-text-stroke:0.45px #555;letter-spacing:0.324px;">Zeiterfassung</span>
<span class="t" style="left:1312.50px;top:229px;font-size:14.7px;line-height:16px;color:#555;-webkit-text-stroke:0.45px #555;letter-spacing:0.772px;">Termin</span>
<span class="t" style="left:969.50px;top:208px;font-size:14.7px;line-height:16px;color:#555;-webkit-text-stroke:0.45px #555;letter-spacing:0.260px;">Aufgezeichnete</span>
<div style="left:806px;top:309px;width:135px;height:200px;background:#fff;border:1px solid #c8c8c8;box-sizing:border-box;box-shadow:0 5px 11px rgba(0,0,0,.19);"></div>
<div style="left:932px;top:315.2px;width:8px;height:189.7px;background:#f1f1f1;"></div>
<div style="left:932px;top:315.2px;width:8px;height:86.4px;background:#8b8b8b;"></div>
<span class="t" style="left:822.00px;top:316px;font-size:13.2px;line-height:15px;color:#666;letter-spacing:0.087px;">Benötigt KV</span>
<span class="t" style="left:822.00px;top:346px;font-size:13.2px;line-height:15px;color:#666;letter-spacing:0.022px;">Fertig für KV</span>
<span class="t" style="left:822.00px;top:375px;font-size:13.2px;line-height:15px;color:#666;letter-spacing:0.275px;">In Reparatur</span>
<span class="t" style="left:822.00px;top:404px;font-size:13.2px;line-height:15px;color:#666;letter-spacing:0.036px;">Benötigt ET</span>
<span class="t" style="left:822.00px;top:434px;font-size:13.2px;line-height:15px;color:#666;letter-spacing:0.160px;">zur</span>
<span class="t" style="left:822.00px;top:453px;font-size:13.2px;line-height:15px;color:#666;letter-spacing:0.391px;">Endkontrolle</span>
<span class="t" style="left:822.00px;top:482px;font-size:13.2px;line-height:15px;color:#666;letter-spacing:0.248px;">Erledigt</span>
<div style="left:816.8px;top:474.3px;width:55.3px;height:28.7px;border:3px solid #f0000f;box-sizing:border-box;"></div>
<div style="left:806px;top:329px;width:1px;height:33px;background:#30b088;"></div>
<div style="left:806px;top:389px;width:1px;height:33px;background:#1b1d2b;"></div>
<div style="left:806px;top:450px;width:1px;height:33px;background:#c9962c;"></div>
</main>
<nav>
<div style="left:228px;top:57px;width:1469px;height:52px;background:#f7f7f7;"></div>
<div style="left:228px;top:109px;width:1469px;height:1px;background:#d3d3d3;"></div>
<div style="left:244px;top:106px;width:197px;height:3px;background:#3b6fd8;"></div>
<svg style="left:258px;top:76px;" width="14.2" height="14" viewBox="0 0 14.2 14"><path d="M.65 4.2 L3.6 .65 H9.3 V3.4 M.65 4.2 V10.2 H5.2 M3.6 .65 V4.2 H.65 M6 7.3 L8.6 4.2 H13.4 V13.2 H6 Z M8.6 4.2 V7.3 H6" fill="none" stroke="#444" stroke-width="1.25" stroke-linejoin="round" stroke-linecap="round"/></svg>
<span class="t" style="left:280.60px;top:75px;font-size:14.7px;line-height:16px;color:#3f3f3f;letter-spacing:0.066px;">Werkstattaufträge (65)</span>
<svg style="left:458.4px;top:76.4px;" width="14.2" height="14" viewBox="0 0 14.2 14"><path d="M.65 4.2 L3.6 .65 H9.3 V3.4 M.65 4.2 V10.2 H5.2 M3.6 .65 V4.2 H.65 M6 7.3 L8.6 4.2 H13.4 V13.2 H6 Z M8.6 4.2 V7.3 H6" fill="none" stroke="#a5a5a5" stroke-width="1.25" stroke-linejoin="round" stroke-linecap="round"/></svg>
<span class="t" style="left:481.30px;top:75px;font-size:14.7px;line-height:16px;color:#a0a0a0;letter-spacing:0.112px;">Meine Werkstattaufträge</span>
<svg style="left:675px;top:77px;" width="12.4" height="12.4" viewBox="0 0 12 12"><circle cx="6" cy="6" r="5" fill="none" stroke="#a0a0a0" stroke-width="1.7"/><path d="M6.2 3.2v3.2H3.8" fill="none" stroke="#a0a0a0" stroke-width="1.4"/></svg>
<span class="t" style="left:695.50px;top:75px;font-size:14.7px;line-height:16px;color:#a0a0a0;letter-spacing:-0.038px;">Aufgezeichnete Zeit</span>
<div style="left:1651px;top:68px;width:31px;height:29.6px;background:#e67c76;"></div>
<svg style="left:1661.3px;top:76.6px;" width="10.6" height="11.6" viewBox="0 0 12 13"><path d="M4.3 2.3 V1.4 a.7.7 0 0 1 .7-.7 h2 a.7.7 0 0 1 .7.7 v.9 M2 3 V11 a1.2 1.2 0 0 0 1.2 1.2 h5.6 a1.2 1.2 0 0 0 1.2-1.2 V3" fill="none" stroke="#fff" stroke-width="1.15"/><path d="M.7 2.8 H11.3" stroke="#fff" stroke-width="1.25"/><path d="M4.3 5 v5 M6 5 v5 M7.7 5 v5" stroke="#fff" stroke-width=".95"/></svg>
<svg style="left:1609.8px;top:157px;" width="11.4" height="12" viewBox="0 0 12 12.5"><path d="M4.1 1.7 V1 a.6.6 0 0 1 .6-.6 h2.6 a.6.6 0 0 1 .6.6 v.7" stroke="#fff" fill="none" stroke-width="1"/><rect x=".3" y="1.7" width="11.4" height="1.5" rx=".5" fill="#fff"/><path d="M1.5 3.9 h9 v7 a1.2 1.2 0 0 1-1.2 1.2 h-6.6 a1.2 1.2 0 0 1-1.2-1.2z" fill="#fff"/><path d="M3.75 5.3v5 M6 5.3v5 M8.25 5.3v5" stroke="#f3ad35" stroke-width="1"/></svg>
</nav>
<footer>
<div style="left:228px;top:804px;width:1469px;height:1px;background:#cfcfcf;"></div>
<div style="left:228px;top:805px;width:1469px;height:40px;background:#f7f7f7;"></div>
<span class="t" style="left:242.70px;top:819px;font-size:13.2px;line-height:15px;color:#979797;letter-spacing:0.347px;">© 2025</span>
<span class="t" style="left:289.60px;top:819px;font-size:13.2px;line-height:15px;color:#909090;-webkit-text-stroke:0.45px #909090;letter-spacing:0.216px;">ALCOLM Business Software</span>
<span class="t" style="left:1483.90px;top:819px;font-size:13.2px;line-height:15px;color:#a0a0a0;letter-spacing:0.263px;">Mittwoch, 29. Oktober 2025</span>
<div style="left:1663.4px;top:814.2px;width:24.6px;height:24.6px;background:#e6e6e6;border-radius:3px;"></div>
<svg style="left:1670px;top:821.5px;" width="11.4" height="10.6" viewBox="0 0 11.4 10.6"><path d="M5.7 1.2 L1 5.9 M5.7 1.2 L10.4 5.9 M5.7 1.6 V10.6" fill="none" stroke="#999" stroke-width="2.2"/></svg>
</footer>
<header>
<div style="left:228px;top:0px;width:1469px;height:57px;background:#2e3040;"></div>
<div style="left:228px;top:55px;width:1469px;height:1px;background:#2a2c3b;"></div>
<div style="left:228px;top:56px;width:1469px;height:1px;background:#20222e;"></div>
<div style="left:228px;top:57px;width:1469px;height:1px;background:#fdfdfd;"></div>
<div style="left:329px;top:14px;width:173px;height:26px;background:#fff;border-radius:1.5px;"></div>
<span class="t" style="left:341.60px;top:20px;font-size:13.2px;line-height:15px;color:#6a6a6a;letter-spacing:-0.194px;">Suche ...</span>
<svg style="left:290.5px;top:18px;" width="16" height="16" viewBox="0 0 16 16"><circle cx="6.7" cy="6.8" r="5" fill="none" stroke="#e9e9e9" stroke-width="2.2"/><path d="M10.5 10.6 L14.5 14.4" stroke="#e9e9e9" stroke-width="2.6" stroke-linecap="round"/></svg>
<svg style="left:249px;top:16px;" width="20" height="18" viewBox="0 0 20 18"><path d="M11.97,8.64 L11.97,9.76 L10.61,10.51 L10.27,11.32 L10.71,12.82 L9.92,13.61 L8.42,13.17 L7.61,13.51 L6.86,14.87 L5.74,14.87 L4.99,13.51 L4.18,13.17 L2.68,13.61 L1.89,12.82 L2.33,11.32 L1.99,10.51 L0.63,9.76 L0.63,8.64 L1.99,7.89 L2.33,7.08 L1.89,5.58 L2.68,4.79 L4.18,5.23 L4.99,4.89 L5.74,3.53 L6.86,3.53 L7.61,4.89 L8.42,5.23 L9.92,4.79 L10.71,5.58 L10.27,7.08 L10.61,7.89Z M4.40,9.2 a1.9,1.9 0 1,0 3.8,0 a1.9,1.9 0 1,0 -3.8,0Z" fill="#e9e9e9" fill-rule="evenodd"/><path d="M18.47,4.14 L18.47,5.06 L17.49,5.63 L17.14,6.24 L17.13,7.38 L16.34,7.83 L15.35,7.28 L14.65,7.28 L13.66,7.83 L12.87,7.38 L12.86,6.24 L12.51,5.63 L11.53,5.06 L11.53,4.14 L12.51,3.57 L12.86,2.96 L12.87,1.82 L13.66,1.37 L14.65,1.92 L15.35,1.92 L16.34,1.37 L17.13,1.82 L17.14,2.96 L17.49,3.57Z M13.90,4.6 a1.1,1.1 0 1,0 2.2,0 a1.1,1.1 0 1,0 -2.2,0Z" fill="#e9e9e9" fill-rule="evenodd"/><path d="M18.47,13.14 L18.47,14.06 L17.49,14.63 L17.14,15.24 L17.13,16.38 L16.34,16.83 L15.35,16.28 L14.65,16.28 L13.66,16.83 L12.87,16.38 L12.86,15.24 L12.51,14.63 L11.53,14.06 L11.53,13.14 L12.51,12.57 L12.86,11.96 L12.87,10.82 L13.66,10.37 L14.65,10.92 L15.35,10.92 L16.34,10.37 L17.13,10.82 L17.14,11.96 L17.49,12.57Z M13.90,13.6 a1.1,1.1 0 1,0 2.2,0 a1.1,1.1 0 1,0 -2.2,0Z" fill="#e9e9e9" fill-rule="evenodd"/></svg>
<span class="t" style="left:1429.90px;top:19px;font-size:13.2px;line-height:15px;color:#ececec;-webkit-text-stroke:0.45px #ececec;letter-spacing:-0.560px;">DE</span>
<div style="left:1472.3px;top:24.9px;width:6px;height:6px;background:#21232d;border-radius:50%;"></div>
<svg style="left:1505px;top:17px;" width="28" height="20" viewBox="0 0 28 20"><path d="M3.2 16.6 L13.4 4.2 Q14 3.5 14.6 4.2 L24.8 16.6" fill="none" stroke="#2c73f3" stroke-width="3.1" stroke-linecap="round" stroke-linejoin="round"/></svg>
<span class="t" style="left:1552.20px;top:19px;font-size:13.5px;line-height:15px;color:#ececec;-webkit-text-stroke:0.45px #ececec;letter-spacing:0.069px;">Garage24 Demo</span>
<svg style="left:1659px;top:24.2px;" width="8" height="4" viewBox="0 0 8 4"><path d="M0 0h8L4 4z" fill="#717383"/></svg>
</header>
<aside>
<div style="left:0px;top:0px;width:228px;height:845px;background:#22242e;"></div>
<span class="t" style="left:15.50px;top:16px;font-size:17.5px;line-height:20px;color:#ffffff;font-weight:700;letter-spacing:-0.124px;">ALCOLM</span>
<div style="left:190px;top:21px;width:16.3px;height:2.2px;background:#ffffff;"></div>
<div style="left:190px;top:25px;width:16.3px;height:2.2px;background:#ffffff;"></div>
<div style="left:190px;top:29px;width:16.3px;height:2.2px;background:#ffffff;"></div>
<div style="left:16px;top:87px;width:6.4px;height:6.4px;background:#cbcbcb;"></div>
<div style="left:16px;top:94.6px;width:6.4px;height:6.4px;background:#cbcbcb;"></div>
<div style="left:23.6px;top:87px;width:6.4px;height:6.4px;background:#cbcbcb;"></div>
<div style="left:23.6px;top:94.6px;width:6.4px;height:6.4px;background:#cbcbcb;"></div>
<span class="t" style="left:39.90px;top:87px;font-size:14.8px;line-height:16px;color:#cacaca;letter-spacing:-0.687px;">START</span>
<span class="t" style="left:39.80px;top:244px;font-size:14.8px;line-height:16px;color:#cacaca;letter-spacing:-0.769px;">GARAGE</span>
<span class="t" style="left:40.40px;top:486px;font-size:14.8px;line-height:16px;color:#cacaca;letter-spacing:-0.438px;">BÜRO</span>
<span class="t" style="left:40.20px;top:755px;font-size:14.8px;line-height:16px;color:#cacaca;letter-spacing:-1.002px;">RESSOURCEN</span>
<span class="t" style="left:48.80px;top:114px;font-size:12.9px;line-height:15px;color:#c3c3c3;letter-spacing:-0.096px;">Dashboard</span>
<span class="t" style="left:48.80px;top:142px;font-size:12.9px;line-height:15px;color:#c3c3c3;letter-spacing:-0.255px;">Calendar v2</span>
<span class="t" style="left:48.80px;top:170px;font-size:12.9px;line-height:15px;color:#c3c3c3;letter-spacing:-0.568px;">E-Mail &amp; SMS</span>
<span class="t" style="left:48.80px;top:198px;font-size:12.9px;line-height:15px;color:#c3c3c3;letter-spacing:0.008px;">Dokumentenmanagement</span>
<span class="t" style="left:48.80px;top:272px;font-size:12.9px;line-height:15px;color:#c3c3c3;letter-spacing:-0.100px;">Kalender</span>
<span class="t" style="left:48.80px;top:300px;font-size:12.9px;line-height:15px;color:#c3c3c3;letter-spacing:0.030px;">Termin Dashboard</span>
<span class="t" style="left:48.80px;top:328px;font-size:12.9px;line-height:15px;color:#c3c3c3;letter-spacing:-0.065px;">Kunden &amp; Lieferanten</span>
<span class="t" style="left:48.80px;top:356px;font-size:12.9px;line-height:15px;color:#c3c3c3;letter-spacing:-0.347px;">Fahrzeuge</span>
<span class="t" style="left:48.80px;top:384px;font-size:12.9px;line-height:15px;color:#c3c3c3;letter-spacing:-0.191px;">Wagenbuch</span>
<span class="t" style="left:48.80px;top:412px;font-size:12.9px;line-height:15px;color:#c3c3c3;letter-spacing:0.052px;">Offerten / Aufträge</span>
<span class="t" style="left:48.80px;top:440px;font-size:12.9px;line-height:15px;color:#ffffff;letter-spacing:0.035px;">Werkstattaufträge</span>
<span class="t" style="left:48.80px;top:513px;font-size:12.9px;line-height:15px;color:#c3c3c3;letter-spacing:-0.176px;">Rechnungen (Debitoren)</span>
<span class="t" style="left:48.80px;top:541px;font-size:12.9px;line-height:15px;color:#c3c3c3;letter-spacing:-0.128px;">Zahlungen (Debitoren)</span>
<span class="t" style="left:48.80px;top:569px;font-size:12.9px;line-height:15px;color:#c3c3c3;letter-spacing:-0.145px;">Mahnwesen</span>
<span class="t" style="left:48.80px;top:597px;font-size:12.9px;line-height:15px;color:#c3c3c3;letter-spacing:-0.176px;">Rechnungen (Kreditoren)</span>
<span class="t" style="left:48.80px;top:625px;font-size:12.9px;line-height:15px;color:#c3c3c3;letter-spacing:-0.098px;">Zahlungen (Kreditoren)</span>
<span class="t" style="left:48.80px;top:653px;font-size:12.9px;line-height:15px;color:#c3c3c3;letter-spacing:-0.007px;">Buchhaltung</span>
<span class="t" style="left:48.80px;top:681px;font-size:12.9px;line-height:15px;color:#c3c3c3;letter-spacing:-0.019px;">Lohn</span>
<span class="t" style="left:48.80px;top:709px;font-size:12.9px;line-height:15px;color:#c3c3c3;letter-spacing:-0.015px;">Dokumenten management</span>
<span class="t" style="left:48.80px;top:782px;font-size:12.9px;line-height:15px;color:#c3c3c3;letter-spacing:-0.191px;">Wagenbuch</span>
<span class="t" style="left:48.80px;top:810px;font-size:12.9px;line-height:15px;color:#c3c3c3;">Projekte</span>
<span class="t" style="left:48.80px;top:838px;font-size:12.9px;line-height:15px;color:#c3c3c3;letter-spacing:-0.136px;">Bestellungen</span>
<svg style="left:24.4px;top:243.2px;" width="11.4" height="11.8" viewBox="0 0 15 14"><path d="M1.2 6.3 L2.9 1.9 Q3.3 .9 4.4 .9 H10.6 Q11.7 .9 12.1 1.9 L13.8 6.3 Q14.6 6.6 14.6 7.6 V13 a.7.7 0 0 1-.7.7 H12.2 a.7.7 0 0 1-.7-.7 V12 H3.5 V13 a.7.7 0 0 1-.7.7 H1.1 a.7.7 0 0 1-.7-.7 V7.6 Q.4 6.6 1.2 6.3 Z M3.6 5.3 H11.4 L10.5 2.6 H4.5 Z M1.6 8 l2.3.6 v.8 H1.6z M13.4 8 l-2.3.6 v.8 h2.3z M5.3 9.9 h4.4 v1.1 H5.3z" fill="#c9c9c9" fill-rule="evenodd"/></svg>
<svg style="left:11.8px;top:244.8px;" width="17" height="15.8" viewBox="-1 -1 17 16"><path d="M1.2 6.3 L2.9 1.9 Q3.3 .9 4.4 .9 H10.6 Q11.7 .9 12.1 1.9 L13.8 6.3 Q14.6 6.6 14.6 7.6 V13 a.7.7 0 0 1-.7.7 H12.2 a.7.7 0 0 1-.7-.7 V12 H3.5 V13 a.7.7 0 0 1-.7.7 H1.1 a.7.7 0 0 1-.7-.7 V7.6 Q.4 6.6 1.2 6.3 Z" fill="#22242e" stroke="#22242e" stroke-width="2"/><path d="M1.2 6.3 L2.9 1.9 Q3.3 .9 4.4 .9 H10.6 Q11.7 .9 12.1 1.9 L13.8 6.3 Q14.6 6.6 14.6 7.6 V13 a.7.7 0 0 1-.7.7 H12.2 a.7.7 0 0 1-.7-.7 V12 H3.5 V13 a.7.7 0 0 1-.7.7 H1.1 a.7.7 0 0 1-.7-.7 V7.6 Q.4 6.6 1.2 6.3 Z M3.6 5.3 H11.4 L10.5 2.6 H4.5 Z M1.6 8 l2.3.6 v.8 H1.6z M13.4 8 l-2.3.6 v.8 h2.3z M5.3 9.9 h4.4 v1.1 H5.3z" fill="#d6d6d6" fill-rule="evenodd"/></svg>
<svg style="left:17px;top:485.4px;" width="13.4" height="15.2" viewBox="0 0 13.4 15.2"><rect x=".3" y=".3" width="12.8" height="14.6" rx="1.6" fill="#d2d2d2"/><rect x="2.3" y="2.3" width="8.9" height="2.5" fill="#22242e"/><rect x="2.5" y="6.6" width="1.5" height="1.25" fill="#22242e"/><rect x="5" y="6.6" width="1.5" height="1.25" fill="#22242e"/><rect x="7.5" y="6.6" width="1.5" height="1.25" fill="#22242e"/><rect x="2.5" y="8.6" width="1.5" height="1.25" fill="#22242e"/><rect x="5" y="8.6" width="1.5" height="1.25" fill="#22242e"/><rect x="7.5" y="8.6" width="1.5" height="1.25" fill="#22242e"/><rect x="2.5" y="10.6" width="1.5" height="1.25" fill="#22242e"/><rect x="5" y="10.6" width="1.5" height="1.25" fill="#22242e"/><rect x="7.5" y="10.6" width="1.5" height="1.25" fill="#22242e"/><rect x="2.5" y="12.6" width="1.5" height="1.25" fill="#22242e"/><rect x="5" y="12.6" width="1.5" height="1.25" fill="#22242e"/><rect x="7.5" y="12.6" width="1.5" height="1.25" fill="#22242e"/><rect x="10" y="6.6" width="1.5" height="1.25" fill="#22242e"/><rect x="10" y="8.6" width="1.4" height="5" fill="#22242e"/></svg>
<svg style="left:15.8px;top:754.2px;" width="15.4" height="14.6" viewBox="0 0 15.4 14.6"><path d="M7.7 .3 C9.7 .3 10.7 1.7 10.6 3.6 C10.5 5.4 9.7 6.4 9.5 7.3 C9.4 8.2 10 8.7 11 9.2 L13.9 10.6 C14.9 11.1 15.1 11.8 15.1 12.6 V13.4 Q15.1 14.3 14.2 14.3 H1.2 Q.3 14.3 .3 13.4 V12.6 C.3 11.8 .5 11.1 1.5 10.6 L4.4 9.2 C5.4 8.7 6 8.2 5.9 7.3 C5.7 6.4 4.9 5.4 4.8 3.6 C4.7 1.7 5.7 .3 7.7 .3Z" fill="#cfcfcf"/></svg>
</aside>
</div></body></html>
